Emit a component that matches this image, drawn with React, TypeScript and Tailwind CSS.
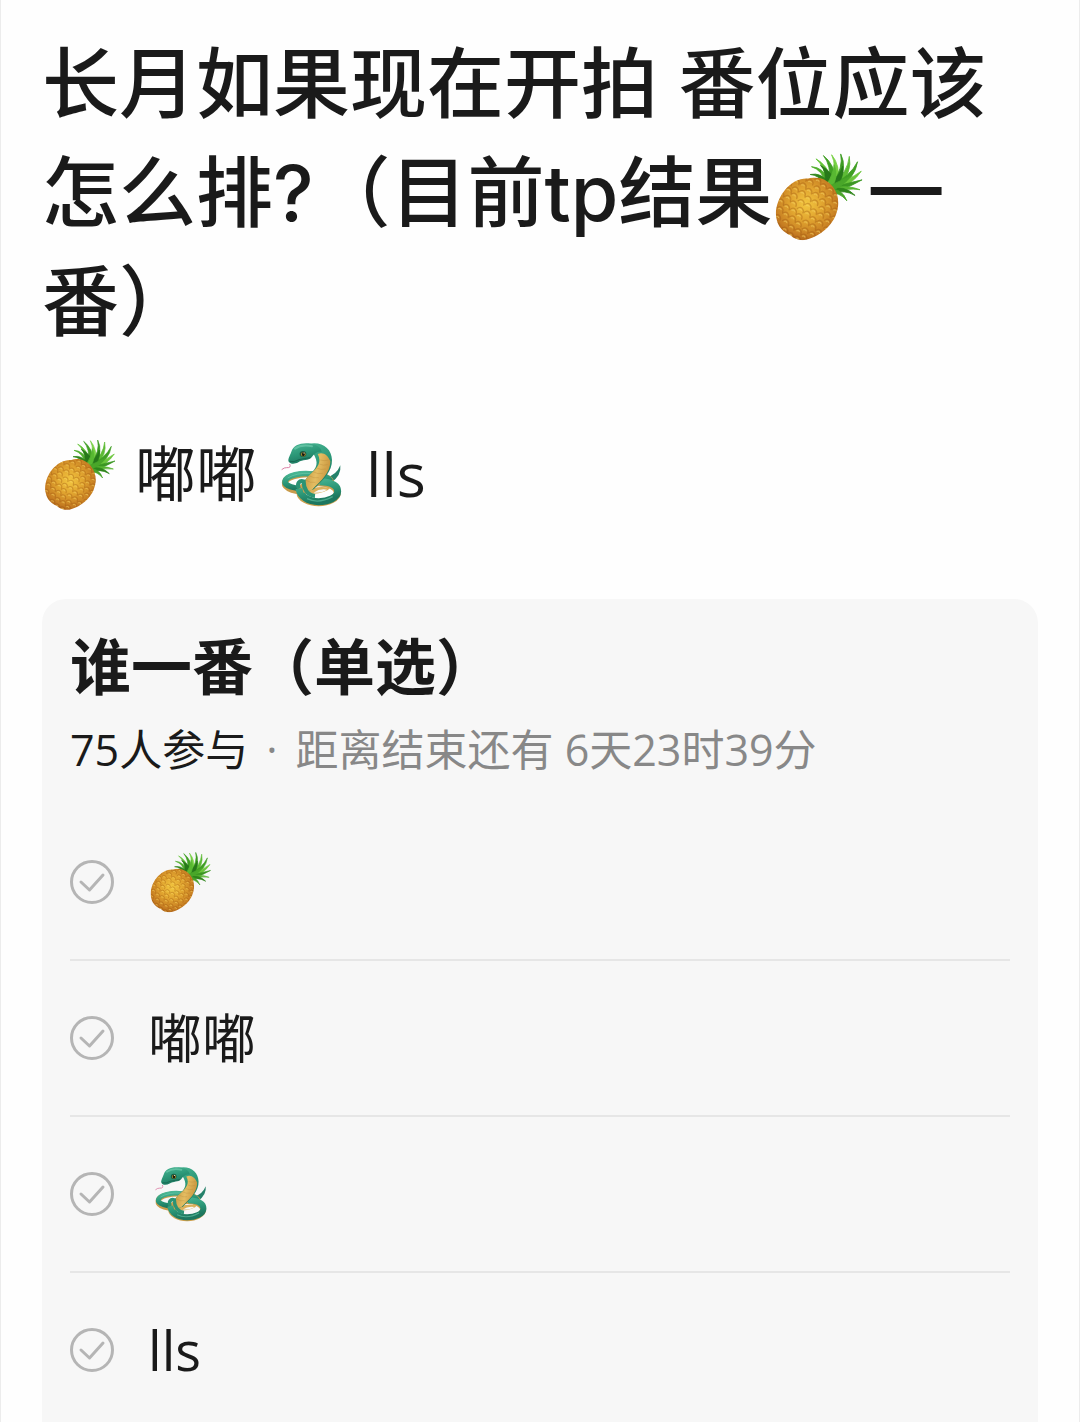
import { ReactNode, useState } from "react"

interface IconProps {
  className: string
}

interface IOption {
  id: string
  content: ReactNode
}

const LEAVES = [
  { d: "M130 84 Q124 52 96 43 Q124 44 140 78 Z", fill: "#4fae2c" },
  { d: "M134 82 Q128 42 107 24 Q134 38 146 76 Z", fill: "#64c337" },
  { d: "M140 80 Q144 40 125 16 Q153 38 154 76 Z", fill: "#3f9f23" },
  { d: "M146 80 Q158 42 145 14 Q167 40 160 80 Z", fill: "#76cf42" },
  { d: "M148 82 Q174 46 167 12 Q184 44 160 88 Z", fill: "#3c9b22" },
  { d: "M148 84 Q184 58 188 18 Q196 56 162 92 Z", fill: "#5dbb35" },
  { d: "M146 88 Q190 66 208 31 Q202 72 158 96 Z", fill: "#3f9f23" },
  { d: "M144 92 Q186 76 217 54 Q196 86 156 100 Z", fill: "#6bc63b" },
  { d: "M142 94 Q190 82 219 75 Q190 93 152 104 Z", fill: "#3a9621" },
  { d: "M138 96 Q184 86 214 99 Q182 94 150 106 Z", fill: "#57b431" },
  { d: "M134 98 Q178 86 202 113 Q176 98 148 108 Z", fill: "#2f861b" },
  { d: "M130 98 Q170 92 182 126 Q162 102 142 110 Z", fill: "#4aa52a" },
  { d: "M124 82 Q114 64 93 62 Q120 56 140 84 Z", fill: "#2f861b" },
  { d: "M128 86 Q134 54 118 40 Q150 56 150 84 Z", fill: "#27781a" },
  { d: "M134 90 Q166 64 172 42 Q178 72 148 98 Z", fill: "#27781a" },
  { d: "M132 88 Q150 60 151 38 Q164 68 144 94 Z", fill: "#58b832" },
  { d: "M134 92 Q170 76 192 66 Q174 90 146 100 Z", fill: "#49a629" },
]

// staggered rows of fruit eyes, clipped to the body
const SCALES = Array.from({ length: 12 }, (_, row) =>
  Array.from({ length: 9 }, (_, col) => ({
    x: -74 + col * 20 + (row % 2) * 10 + ((row * 5 + col * 3) % 4),
    y: -84 + row * 16 + ((row * 3 + col * 7) % 5),
  }))
).flat()

function Pineapple({ className }: IconProps) {
  return (
    <svg viewBox="0 0 231 231" className={className} role="img" aria-label="菠萝">
      <defs>
        <radialGradient id="pineBody" cx="0.36" cy="0.58" r="0.44">
          <stop offset="0" stopColor="#f3c740" />
          <stop offset="0.4" stopColor="#e0a32f" />
          <stop offset="0.75" stopColor="#c67d22" />
          <stop offset="1" stopColor="#9c5216" />
        </radialGradient>
        <clipPath id="pineClip">
          <path d="M88 72 C108 65 133 72 148 92 C163 112 165 135 155 161 C145 187 116 211 89 219 C73 225 54 220 45 210 C29 203 16 191 12 174 C4 151 15 119 31 100 C47 82 65 71 88 72 Z" />
        </clipPath>
      </defs>
      {LEAVES.map((leaf) => (
        <path
          key={leaf.d}
          d={leaf.d}
          fill={leaf.fill}
          stroke={leaf.fill}
          strokeWidth="2"
          strokeLinejoin="round"
        />
      ))}
      <g clipPath="url(#pineClip)">
        <rect width="231" height="231" fill="url(#pineBody)" />
        <g transform="translate(86 145) rotate(38)">
          {SCALES.map(({ x, y }) => (
            <g key={`${x}:${y}`}>
              <path
                d={`M${x - 9} ${y} Q${x - 7} ${y - 9} ${x} ${y - 9} Q${x + 8} ${y - 8} ${x + 9} ${y}`}
                fill="none"
                stroke="#9a5210"
                strokeOpacity="0.35"
                strokeWidth="3"
              />
              <path
                d={`M${x - 5} ${y - 1} Q${x - 1} ${y - 7} ${x + 3} ${y - 3}`}
                fill="none"
                stroke="#f8d667"
                strokeOpacity="0.5"
                strokeWidth="3"
              />
            </g>
          ))}
        </g>
      </g>
    </svg>
  )
}

function Snake({ className }: IconProps) {
  return (
    <svg viewBox="0 0 231 231" className={className} role="img" aria-label="蛇">
      <defs>
        <linearGradient id="snakeSkin" x1="0" y1="0" x2="0.4" y2="1">
          <stop offset="0" stopColor="#4bb795" />
          <stop offset="0.55" stopColor="#2c9878" />
          <stop offset="1" stopColor="#1d775f" />
        </linearGradient>
        <linearGradient id="snakeBelly" x1="0" y1="0" x2="1" y2="0.3">
          <stop offset="0" stopColor="#b98a38" />
          <stop offset="0.6" stopColor="#e4bd62" />
          <stop offset="1" stopColor="#c9963f" />
        </linearGradient>
      </defs>
      <path d="M160 124 Q190 118 202 88 Q206 118 174 141 Z" fill="#24816a" />
      {/* back coil */}
      <path
        d="M104 164 C72 170 34 158 36 140 C38 122 80 112 118 115 C150 118 170 124 174 137"
        fill="none"
        stroke="#c89b4b"
        strokeWidth="19"
      />
      <path
        d="M100 157 C66 160 34 149 36 136 C40 118 84 109 120 114 C150 118 168 124 172 135"
        fill="none"
        stroke="url(#snakeSkin)"
        strokeWidth="17"
      />
      <path d="M44 126 Q70 110 112 112" fill="none" stroke="#73ceae" strokeWidth="3" strokeOpacity="0.6" />
      {/* front coil */}
      <ellipse cx="137" cy="170" rx="56" ry="30" fill="none" stroke="#cda04e" strokeWidth="21" />
      <path
        d="M140 137 C170 138 194 146 194 166 C194 186 164 197 137 197 C104 197 82 180 78 158"
        fill="none"
        stroke="url(#snakeSkin)"
        strokeWidth="21"
      />
      <path d="M102 164 Q126 148 172 155 Q162 170 116 174 Z" fill="#dcb05a" />
      <path d="M122 170 Q140 157 162 161 Q150 171 122 170 Z" fill="#f7f7f7" />
      {/* raised neck: skin outside, belly inside */}
      <path
        d="M104 24 C146 14 176 36 177 72 C178 106 152 130 122 160 L92 168 C84 153 91 137 104 122 C126 101 139 88 125 60 Z"
        fill="url(#snakeSkin)"
      />
      <path
        d="M134 54 C150 46 166 58 172 76 C172 110 145 134 117 161 L92 170 C84 153 91 137 104 122 C128 100 144 86 138 64 Z"
        fill="url(#snakeBelly)"
      />
      <path
        d="M142 72 Q154 76 166 72 M139 84 Q151 90 164 86 M131 96 Q144 103 158 99 M120 107 Q134 116 149 112 M108 119 Q122 128 137 125 M98 132 Q112 142 127 139"
        fill="none"
        stroke="#a9792f"
        strokeOpacity="0.4"
        strokeWidth="2"
      />
      <path
        d="M78 158 C70 142 80 132 92 136 C92 158 103 178 126 180"
        fill="none"
        stroke="#2b9374"
        strokeWidth="12"
      />
      <path d="M102 188 Q136 205 179 182" fill="none" stroke="#64c5a4" strokeWidth="4" strokeOpacity="0.65" />
      {/* head */}
      <path d="M50 84 Q56 96 41 95 Q34 94 26 101" fill="none" stroke="#db7fa5" strokeWidth="3" />
      <path
        d="M55 47 C61 27 85 19 113 23 C133 26 145 35 146 48 C136 45 124 50 116 64 C106 75 89 70 76 79 C65 85 53 85 48 78 C43 71 49 63 55 47 Z"
        fill="url(#snakeSkin)"
      />
      <path d="M66 38 Q86 24 117 31" fill="none" stroke="#77d0b2" strokeWidth="6" strokeLinecap="round" strokeOpacity="0.6" />
      <path d="M50 76 Q63 80 78 71 Q97 67 112 65" fill="none" stroke="#176651" strokeWidth="3" />
      <ellipse cx="90" cy="54" rx="10" ry="9" fill="#1a5a44" />
      <ellipse cx="91" cy="55" rx="7" ry="6.500" fill="#a88a26" />
      <ellipse cx="91" cy="55" rx="4" ry="6" fill="#171a12" />
      <circle cx="93" cy="51" r="1.800" fill="#ffffff" />
    </svg>
  )
}

const OPTIONS: IOption[] = [
  { id: "pineapple", content: <Pineapple className="size-[66px]" /> },
  { id: "dudu", content: "嘟嘟" },
  { id: "snake", content: <Snake className="size-[66px]" /> },
  { id: "lls", content: "lls" },
]

interface PollOptionProps {
  option: IOption
  checked: boolean
  onSelect: (id: string) => void
}

function PollOption({ option, checked, onSelect }: PollOptionProps) {
  return (
    <li className="border-b-2 border-[#e6e6e6] last:border-b-0">
      <label className="flex h-[154px] cursor-pointer items-center gap-[34px]">
        <span className="relative size-11 shrink-0">
          <input
            type="radio"
            name="poll"
            value={option.id}
            checked={checked}
            onChange={() => onSelect(option.id)}
            className="block size-11 appearance-none rounded-full border-3 border-[#b5b5b5] checked:border-red-500"
          />
          <svg
            viewBox="0 0 44 44"
            className={`pointer-events-none absolute inset-0 size-11 ${
              checked ? "text-red-500" : "text-[#b5b5b5]"
            }`}
            fill="none"
            stroke="currentColor"
            strokeWidth="3"
            strokeLinecap="round"
            strokeLinejoin="round"
          >
            <path d="M11 22 L19.500 30 L33 15" />
          </svg>
        </span>
        <span className="text-[54px] leading-[72px]">{option.content}</span>
      </label>
    </li>
  )
}

export default function App() {
  const [selected, setSelected] = useState<string | null>(null)

  return (
    <main className="min-h-screen border-x border-[#ececec] bg-[#fefefe] px-[41px] pt-[30px] font-['Open_Sans','Noto_Sans_CJK_SC',sans-serif] text-[#1a1a1a]">
      <h1 className="font-['Inter','Noto_Sans_CJK_SC',sans-serif] text-[77px] leading-[109px] font-medium">
        长月如果现在开拍 番位应该怎么排?（目前tp结果
        <Pineapple className="inline-block size-[95px] align-[-0.3em]" />
        一番）
      </h1>

      <p className="mt-[72px] flex items-center gap-4 text-[61px] leading-[90px]">
        <Pineapple className="size-[77px]" />
        <span>嘟嘟</span>
        <Snake className="size-[77px]" />
        <span>lls</span>
      </p>

      <section className="mt-20 rounded-t-3xl bg-[#f7f7f7] px-7 pt-6">
        <h2 className="text-[61px] leading-[88px] font-bold">谁一番（单选）</h2>
        <p className="mt-2 text-[43px] leading-[62px] text-[#888888]">
          <span className="text-[#1a1a1a]">75人参与</span>
          <span className="mx-[18px]">·</span>
          距离结束还有 6天23时39分
        </p>
        <ul className="mt-6">
          {OPTIONS.map((option) => (
            <PollOption
              key={option.id}
              option={option}
              checked={selected === option.id}
              onSelect={setSelected}
            />
          ))}
        </ul>
      </section>
    </main>
  )
}
